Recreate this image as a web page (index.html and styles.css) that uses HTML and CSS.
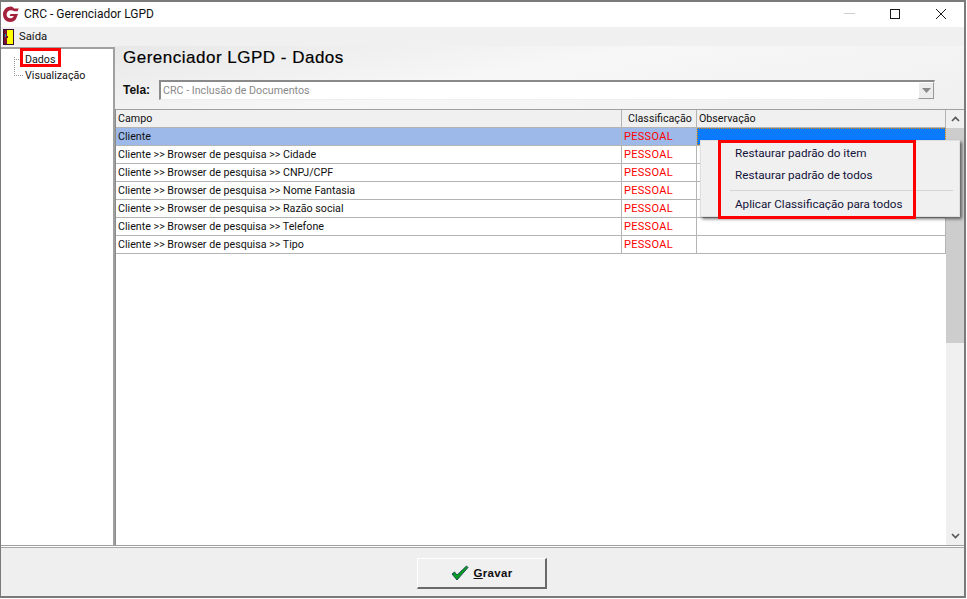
FILE: index.html
```html
<!DOCTYPE html>
<html lang="pt">
<head>
<meta charset="utf-8">
<title>CRC - Gerenciador LGPD</title>
<link rel="stylesheet" href="styles.css">
</head>
<body>
<div class="window">
  <header class="titlebar">
    <svg class="logo" width="18" height="18" viewBox="0 0 18 18"><path d="M9 1.500C4.500 1.500 1 5 1 9.500s3.200 7.500 7.200 7.500c2.600 0 4.600-1.200 5.800-3l2-5H8.500L7.600 11h4.200c-.7 1.500-2 2.300-3.500 2.300-2.200 0-3.700-1.700-3.700-3.900C4.600 7 6.500 5.200 9 5.200c1.300 0 2.400.4 3.200 1.100h3.500l1-2.800H12C11.200 2.300 10.200 1.500 9 1.500z" fill="#a5203a"/></svg>
    <span class="title-text">CRC - Gerenciador LGPD</span>
    <div class="win-controls">
      <span class="win-min"></span>
      <svg width="12" height="12" viewBox="0 0 12 12"><rect x="1.500" y="1.500" width="9" height="9" fill="none" stroke="#1a1a1a"/></svg>
      <svg width="12" height="12" viewBox="0 0 12 12"><path d="M1 1l10 10M11 1L1 11" stroke="#1a1a1a" fill="none"/></svg>
    </div>
  </header>
  <nav class="menubar">
    <svg width="11" height="16" viewBox="0 0 11 16"><rect x="0.500" y="0.500" width="10" height="15" fill="#ffff00" stroke="#30102a"/><path d="M1 1h3v6h1v2H4v6H1z" fill="#7a1030"/><rect x="2" y="5" width="1" height="3" fill="#00a0c0"/></svg>
    <span>Saída</span>
  </nav>
  <main class="body">
    <aside class="tree">
      <div class="tree-line"></div>
      <div class="tree-item"><span class="tree-dash"></span><span>Dados</span></div>
      <div class="tree-item"><span class="tree-dash"></span><span>Visualização</span></div>
    </aside>
    <section class="content">
      <div class="head">
        <h1>Gerenciador LGPD - Dados</h1>
        <div class="field">
          <label>Tela:</label>
          <div class="combo">
            <span>CRC - Inclusão de Documentos</span>
            <span class="combo-btn"><svg width="9" height="5" viewBox="0 0 9 5"><path d="M0 0h9L4.500 5z" fill="#8a8a8a"/></svg></span>
          </div>
        </div>
      </div>
      <div class="grid-wrap">
        <div class="grid">
          <div class="row row-head"><div class="c1">Campo</div><div class="c2">Classificação</div><div class="c3">Observação</div></div>
          <div class="row row-sel"><div class="c1">Cliente</div><div class="c2 red">PESSOAL</div><div class="c3 active"></div></div>
          <div class="row"><div class="c1">Cliente &gt;&gt; Browser de pesquisa &gt;&gt; Cidade</div><div class="c2 red">PESSOAL</div><div class="c3"></div></div>
          <div class="row"><div class="c1">Cliente &gt;&gt; Browser de pesquisa &gt;&gt; CNPJ/CPF</div><div class="c2 red">PESSOAL</div><div class="c3"></div></div>
          <div class="row"><div class="c1">Cliente &gt;&gt; Browser de pesquisa &gt;&gt; Nome Fantasia</div><div class="c2 red">PESSOAL</div><div class="c3"></div></div>
          <div class="row"><div class="c1">Cliente &gt;&gt; Browser de pesquisa &gt;&gt; Razão social</div><div class="c2 red">PESSOAL</div><div class="c3"></div></div>
          <div class="row"><div class="c1">Cliente &gt;&gt; Browser de pesquisa &gt;&gt; Telefone</div><div class="c2 red">PESSOAL</div><div class="c3"></div></div>
          <div class="row"><div class="c1">Cliente &gt;&gt; Browser de pesquisa &gt;&gt; Tipo</div><div class="c2 red">PESSOAL</div><div class="c3"></div></div>
        </div>
        <div class="scrollbar">
          <div class="sb-btn"><svg width="9" height="6" viewBox="0 0 9 6"><path d="M1 5l3.500-3.500L8 5" fill="none" stroke="#555" stroke-width="1.600"/></svg></div>
          <div class="sb-thumb"></div>
          <div class="sb-track"></div>
          <div class="sb-btn"><svg width="9" height="6" viewBox="0 0 9 6"><path d="M1 1l3.500 3.500L8 1" fill="none" stroke="#555" stroke-width="1.600"/></svg></div>
        </div>
      </div>
    </section>
  </main>
  <footer class="footer">
    <button class="save" type="button">
      <svg width="18" height="16" viewBox="0 0 18 16"><path d="M1 9l2.500-2 2.500 3L15.500 1 17 2.500 6 15z" fill="#0aa020" stroke="#0a2a50" stroke-width="0.800"/></svg>
      <span><u>G</u>ravar</span>
    </button>
  </footer>
  <div class="menu">
    <div class="menu-item">Restaurar padrão do item</div>
    <div class="menu-item">Restaurar padrão de todos</div>
    <div class="menu-sep"></div>
    <div class="menu-item">Aplicar Classificação para todos</div>
  </div>
  <div class="mark mark-tree"></div>
  <div class="mark mark-menu"></div>
</div>
</body>
</html>
```
FILE: styles.css
```css
* { box-sizing: border-box; }
html, body { margin: 0; padding: 0; }
body { width: 967px; height: 599px; overflow: hidden; background: #fff; font-family: Roboto, "Liberation Sans", Arial, sans-serif; font-size: 10.700px; color: #111; }
.window { position: relative; width: 966px; height: 598px; border: 1px solid #7a7a7a; border-top: 2px solid #7a7a7a; border-bottom: 2px solid #7a7a7a; border-right: 2px solid #7a7a7a; display: flex; flex-direction: column; }
.titlebar { height: 25px; flex: none; background: #fff; display: flex; align-items: center; padding: 0 0 2px 1px; }
.logo { margin-right: 4px; }
.title-text { font-size: 12px; }
.win-controls { margin-left: auto; display: flex; align-items: center; gap: 34px; padding-right: 17px; }
.win-min { width: 11px; height: 1px; background: #cfcfcf; }
.menubar { height: 19px; flex: none; background: #f0f0f0; display: flex; align-items: center; gap: 5px; padding-left: 2px; font-size: 11.300px; }
.body { flex: 1; min-height: 0; display: flex; background: #f0f0f0; }
.tree { position: relative; width: 114px; flex: none; margin-top: 1px; background: #fff; border: 2px solid #a0a0a0; border-left: 0; border-bottom-width: 1px; padding-top: 2px; }
.tree-line { position: absolute; left: 13px; top: 8px; height: 17px; border-left: 1px dotted #999; }
.tree-item { display: flex; align-items: center; height: 16px; padding-left: 13px; }
.tree-dash { width: 9px; border-top: 1px dotted #999; margin-right: 2px; }
.content { flex: 1; min-width: 0; display: flex; flex-direction: column; }
.head { height: 63px; flex: none; background: linear-gradient(170deg, #e8e8e8 0%, #f7f7f7 45%, #f0f0f0 100%); padding: 1px 0 0 8px; }
.head h1 { margin: 0; font-family: "Liberation Sans", Arial, sans-serif; font-size: 17px; font-weight: 400; letter-spacing: 0.500px; line-height: 22px; color: #000; -webkit-text-stroke: 0.200px #000; }
.field { display: flex; align-items: center; margin-top: 11px; }
.field label { font-family: "Liberation Sans", Arial, sans-serif; font-weight: 700; font-size: 12px; width: 36px; }
.combo { width: 776px; height: 20px; background: #fff; border: 1px solid #eee; border-top: 2px solid #8a8a8a; border-left: 2px solid #8a8a8a; display: flex; align-items: center; justify-content: space-between; color: #8a8a8a; padding-left: 2px; }
.combo-btn { width: 16px; height: 17px; background: #ececec; border: 1px solid #999; border-top-color: #fff; border-left-color: #fff; display: flex; align-items: center; justify-content: center; }
.grid-wrap { flex: 1; min-height: 0; display: flex; background: #fff; border-top: 1px solid #a0a0a0; border-left: 1px solid #8a8a8a; border-bottom: 1px solid #a0a0a0; }
.grid { width: 830px; flex: none; }
.row { display: flex; height: 18px; border-bottom: 1px solid #b4b4b4; line-height: 18px; }
.row-head { line-height: 17px; }
.row > div { padding-left: 2px; white-space: nowrap; overflow: hidden; }
.c1 { width: 506px; flex: none; border-right: 1px solid #b4b4b4; }
.c2 { width: 75px; flex: none; border-right: 1px solid #b4b4b4; }
.c3 { flex: 1; border-right: 1px solid #b4b4b4; }
.row-head { background: #f0f0f0; }
.row > .c2 { padding-left: 2px; }
.row-head > .c2 { padding-left: 6px; }
.row-sel { background: #9db9e9; }
.red { color: #f00; font-size: 11px; letter-spacing: 0.300px; }
.row > .c3.active { background: #0a7bff; outline: 1px dotted #e08a00; outline-offset: -1px; }
.scrollbar { flex: 1; display: flex; flex-direction: column; background: #f0f0f0; }
.sb-btn { height: 18px; flex: none; display: flex; align-items: center; justify-content: center; }
.sb-thumb { height: 215px; flex: none; background: #cdcdcd; }
.sb-track { flex: 1; background: #f0f0f0; }
.footer { height: 49px; flex: none; background: #efefef; border-top: 1px solid #a8a8a8; margin-top: 1px; display: flex; align-items: center; justify-content: center; padding: 2px 2px 0 0; }
.save { width: 130px; height: 31px; background: #f0f0f0; border: 1px solid #fff; border-right: 2px solid #6a6a6a; border-bottom: 2px solid #6a6a6a; font-family: "Liberation Sans", Arial, sans-serif; font-size: 11.500px; font-weight: 700; letter-spacing: 0.300px; display: flex; align-items: center; justify-content: center; gap: 5px; color: #111; padding: 0 0 0 1px; }
.menu { position: absolute; left: 699px; top: 138px; width: 260px; height: 77px; background: #f0f0f0; border: 1px solid #e0e0e0; box-shadow: 2px 2px 3px rgba(0,0,0,.55); padding: 2px 6px 0 34px; font-size: 11.700px; color: #14143a; }
.menu-item { height: 22px; line-height: 20px; }
.menu-sep { height: 1px; background: #d4d4d4; margin: 3px 0 3px -5px; }
.mark { position: absolute; border: 3px solid #f00; }
.mark-tree { left: 19px; top: 46px; width: 41px; height: 19px; }
.mark-menu { left: 717px; top: 138px; width: 198px; height: 79px; }
```
